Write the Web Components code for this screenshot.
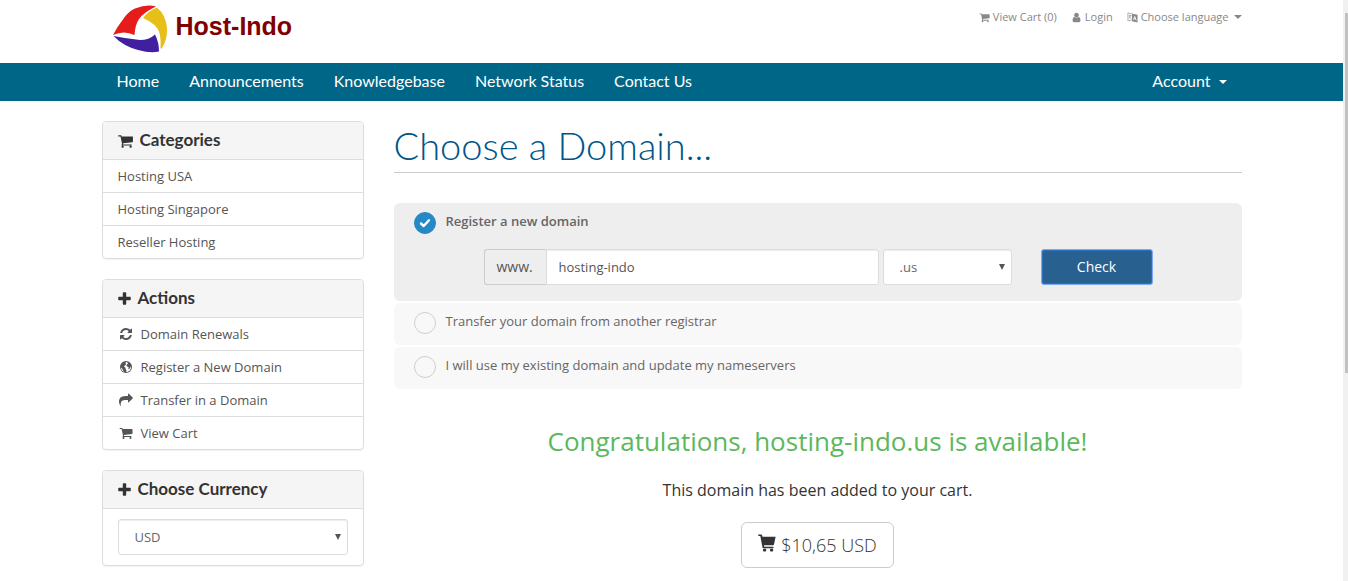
<!DOCTYPE html>
<html lang="en">
<head>
<meta charset="utf-8">
<meta name="viewport" content="width=device-width, initial-scale=1">
<title>Host-Indo - Choose a Domain</title>
<style>
  html, body { margin: 0; }
  body {
    background: #fff; color: #333; font: 13px/20px "Open Sans", sans-serif;
    --display: Lato, "Open Sans", sans-serif;
    --line: #ddd;
  }
</style>
</head>
<body>
<host-app></host-app>

<script>
const ICONS = {
  cart: ['64 0 1664 1792', '<path d="M704 1536q0 52-38 90t-90 38-90-38-38-90 38-90 90-38 90 38 38 90zm896 0q0 52-38 90t-90 38-90-38-38-90 38-90 90-38 90 38 38 90zm128-1088v512q0 24-16.500 42.500t-40.500 21.500l-1044 122q13 60 13 70 0 16-24 64h920q26 0 45 19t19 45-19 45-45 19h-1024q-26 0-45-19t-19-45q0-11 8-31.500t16-36 21.500-40 15.500-29.500l-177-823h-204q-26 0-45-19t-19-45 19-45 45-19h256q16 0 28.500 6.500t19.500 15.500 13 24.500 8 26 5.500 29.500 4.500 26h1201q26 0 45 19t19 45z"/>'],
  plus: ['192 0 1408 1792', '<path d="M1600 736v192q0 40-28 68t-68 28h-416v416q0 40-28 68t-68 28h-192q-40 0-68-28t-28-68v-416h-416q-40 0-68-28t-28-68v-192q0-40 28-68t68-28h416v-416q0-40 28-68t68-28h192q40 0 68 28t28 68v416h416q40 0 68 28t28 68z"/>'],
  refresh: ['0 0 1792 1792', '<path d="M1639 1056q0 5-1 7-64 268-268 434.500t-478 166.500q-146 0-282.500-55t-243.500-157l-129 129q-19 19-45 19t-45-19-19-45v-448q0-26 19-45t45-19h448q26 0 45 19t19 45-19 45l-137 137q71 66 161 102t187 36q134 0 250-65t186-179q11-17 53-117 8-23 30-23h192q13 0 22.500 9.500t9.500 22.500zm25-800v448q0 26-19 45t-45 19h-448q-26 0-45-19t-19-45 19-45l138-138q-148-137-349-137-134 0-250 65t-186 179q-11 17-53 117-8 23-30 23h-199q-13 0-22.500-9.500t-9.500-22.500v-7q65-268 270-434.500t480-166.500q146 0 284 55.500t245 156.500l130-129q19-19 45-19t45 19 19 45z"/>'],
  share: ['0 0 1792 1792', '<path d="M1792 640q0 26-19 45l-512 512q-19 19-45 19t-45-19-19-45v-256h-224q-98 0-175.500 6t-154 21.500-133 42.500-105.500 69.500-80 101-48.500 138.500-17.500 181q0 55 5 123 0 6 2.500 23.500t2.500 26.500q0 15-8.500 25t-23.500 10q-16 0-28-17-7-9-13-22t-13.500-30-10.500-24q-127-285-127-451 0-199 53-333 162-403 875-403h224v-256q0-26 19-45t45-19 45 19l512 512q19 19 19 45z"/>'],
  user: ['0 0 1792 1792', '<path d="M1536 1399q0 109-62.500 187t-150.500 78h-854q-88 0-150.500-78t-62.500-187q0-85 8.500-160.500t31.500-152 58.500-131 94-89 134.500-34.500q131 128 313 128t313-128q76 0 134.500 34.500t94 89 58.500 131 31.500 152 8.500 160.500zm-256-887q0 159-112.500 271.500t-271.500 112.500-271.500-112.500-112.500-271.500 112.500-271.500 271.500-112.500 271.500 112.500 112.500 271.500z"/>'],
  globe: ['0 0 14 14', '<circle cx="7" cy="7" r="6"/><path fill="#fff" d="M7 1.900L8.600 1.900 8 2.800 9.200 3.400 7.900 4.600 7.300 5.600 8.200 6.600 9.600 7 9.300 9.200 10.300 8.900 11.400 7.300 12 6.600 11.900 8.500 10.400 11 8.400 12.100 7 11.800 7.600 10.400 6.700 9.200 6.300 7.600 5 6.800 6 5.200 7.200 4.300 6.500 3.300zM2 7.500L3.200 8.600 4.300 10.900 5.100 11.900 3.400 10.900 2.300 9.300z"/>'],
  language: ['0 0 12 12', '<path fill="none" stroke="currentColor" stroke-width=".7" d="M6 2L1 1V9.600L5.500 8.600M2 4H5M3.500 3V4Q3 6.500 1.800 7M2.500 5L4.700 7"/><path d="M5.500 1.900L11.500 3V11.500L5.500 10z"/><path fill="none" stroke="#fff" stroke-width=".9" d="M7 8.500L8.500 4.800 10 9.200M7.500 7.200L9.400 7.600"/>'],
  basket: ['0 0 18 18', '<path d="M.300.500H3.200Q3.900.500 4.100 1.200L4.500 2.800H17.600L16 10.500Q15.800 11.300 15 11.300H5.900L6.300 12.800H15.500V14.200H5.300Q4.700 14.200 4.500 13.600L2.300 2H.300z"/><rect x="5" y="14.800" width="3.200" height="2.600" rx="1"/><rect x="12" y="14.800" width="3.200" height="2.600" rx="1"/>'],
  caret: ['0 0 8 4', '<path d="M0 0H8L4 4z"/>'],
  arrow: ['0 0 6 6', '<path d="M0 0H6L3 6z"/>'],
  check: ['0 0 12 12', '<path fill="none" stroke="currentColor" stroke-width="2.400" stroke-linecap="round" stroke-linejoin="round" d="M2 6.500L4.700 9 10 3.200"/>'],
  logo: ['0 0 56 48', '<path fill="#e51b1c" d="M0 30Q4 22 11 13 16 6 22 3.500 34-1 43 1.500 31 7 26 14 22 20 21.500 30 11 25 0 30z"/><path fill="#e8bf18" d="M44 2.500Q53 10 54 23 54.500 35 48.500 44L47.500 43Q48 34 46.500 28 44 19 30 13 35 6 44 2.500z"/><path fill="#41209f" d="M.500 31Q13 33.500 27 35 36 35 42 29.500 46 37 46 46.500 38 48.500 25 45 10 41 .500 31z"/>']
};

function define(name, markup, after) {
  const template = document.createElement('template');
  template.innerHTML = markup;
  customElements.define(name, class extends HTMLElement {
    constructor() {
      super();
      this.attachShadow({ mode: 'open' }).append(template.content.cloneNode(true));
    }
    connectedCallback() { if (after) after(this, this.shadowRoot); }
  });
}

define('ui-icon', `
<style>
  :host { display: inline-block; flex: none; width: 14px; height: 14px; }
  svg { display: block; width: 100%; height: 100%; fill: currentColor; }
</style><svg aria-hidden="true"></svg>`, (el, root) => {
  const [box, shape] = ICONS[el.getAttribute('name')];
  const svg = root.querySelector('svg');
  svg.setAttribute('viewBox', box);
  svg.innerHTML = shape;
});

define('site-header', `
<style>
  :host { display: block; }
  .wrap { box-sizing: border-box; max-width: 1170px; margin: 0 auto; padding: 0 15px; display: flex; justify-content: space-between; }
  .top { height: 63px; }
  .brand { display: flex; align-items: center; gap: 7px; margin-left: 11px; height: 58px; color: #800000; font: bold 25px/28px "Liberation Sans", Arial, sans-serif; text-decoration: none; }
  .brand ui-icon { width: 56px; height: 48px; }
  .brand span { margin-bottom: 6px; }
  .tools { display: flex; gap: 14px; padding-top: 7px; font-size: 11px; }
  .tools a { display: flex; align-items: center; gap: 3px; height: 20px; color: #888; text-decoration: none; }
  .tools ui-icon { width: 11px; height: 11px; }
  .tools .caret { width: 8px; height: 4px; margin-left: 2px; }
  .bar { background: #006687; }
  nav a { display: flex; align-items: center; padding: 8px 15px 10px; color: #fff; font: 16px/20px var(--display); text-decoration: none; }
  .menu { display: flex; }
  nav .caret { width: 8px; height: 4px; margin: 2px 0 0 8px; }
</style>
<header class="wrap top">
  <a class="brand" href="#"><ui-icon name="logo"></ui-icon><span>Host-Indo</span></a>
  <div class="tools">
    <a href="#"><ui-icon name="cart"></ui-icon>View Cart (0)</a>
    <a href="#"><ui-icon name="user"></ui-icon>Login</a>
    <a href="#"><ui-icon name="language"></ui-icon>Choose language<ui-icon class="caret" name="caret"></ui-icon></a>
  </div>
</header>
<div class="bar">
  <nav class="wrap">
    <div class="menu">
      <a href="#">Home</a><a href="#">Announcements</a><a href="#">Knowledgebase</a><a href="#">Network Status</a><a href="#">Contact Us</a>
    </div>
    <a href="#">Account<ui-icon class="caret" name="caret"></ui-icon></a>
  </nav>
</div>`);

define('side-panel', `
<style>
  :host { display: block; border: 1px solid var(--line); border-radius: 4px; box-shadow: 0 1px 1px rgba(0,0,0,.05); overflow: hidden; }
  h3 { display: flex; align-items: center; gap: 7px; height: 37px; box-sizing: content-box; margin: 0; padding: 0 15px; background: #f5f5f5; border-bottom: 1px solid var(--line); font: bold 17px/20px var(--display); color: #333; }
  ::slotted(ui-icon) { width: 15px; height: 16px; }
  ::slotted(ui-icon[name=plus]) { width: 13px; }
  h3 span { padding-bottom: 2px; }
</style>
<h3><slot name="icon"></slot><span><slot name="heading"></slot></span></h3>
<slot></slot>`);

define('panel-link', `
<style>
  :host { display: block; }
  :host(:not(:last-child)) { border-bottom: 1px solid var(--line); }
  a { display: flex; align-items: center; height: 32px; padding: 0 15px; color: #555; text-decoration: none; }
  ::slotted(ui-icon) { margin: 0 8px 0 1px; }
</style>
<a href="#"><slot name="icon"></slot><slot></slot></a>`);

const FIELD = `
  .field { box-sizing: border-box; height: 36px; margin: 0; border: 1px solid var(--line); border-radius: 3px; background: #fff; color: #666; font: 13px/20px "Open Sans", sans-serif; box-shadow: inset 0 1px 1px rgba(0,0,0,.075); }
  select.field { appearance: none; width: 100%; padding: 0 16px; }
  .pick { display: grid; align-items: center; }
  .pick > * { grid-area: 1 / 1; }
  .pick ui-icon { width: 6px; height: 6px; justify-self: end; margin-right: 7px; color: #555; pointer-events: none; }`;

define('currency-picker', `
<style>:host { display: block; padding: 10px 15px; } ${FIELD}</style>
<div class="pick"><select class="field" aria-label="Choose Currency"><option>USD</option></select><ui-icon name="arrow"></ui-icon></div>`);

define('domain-options', `
<style>
  ${FIELD}
  :host { display: grid; gap: 2px; }
  .option { min-height: 42px; background: #f8f8f8; border-radius: 6px; }
  .option.on { min-height: 98px; background: #eee; }
  .choice { display: flex; gap: 10px; padding: 9px 20px 0; color: #666; }
  .on .choice { font-weight: 600; }
  .choice > span { line-height: 18px; }
  .dot { display: grid; place-items: center; flex: none; }
  .dot > * { grid-area: 1 / 1; }
  input[type=radio] { appearance: none; box-sizing: border-box; width: 22px; height: 22px; margin: 0; border: 1px solid #d0d0c8; border-radius: 50%; }
  input[type=radio]:checked { background: #2489c5; border-color: #2489c5; }
  .dot ui-icon { width: 12px; height: 12px; color: #fff; pointer-events: none; }
  .search { display: grid; grid-template-columns: 1fr 129px 112px; margin: 15px 89px 0 90px; }
  .group { display: flex; margin-right: 4px; }
  .addon { box-sizing: border-box; width: 62px; height: 36px; padding: 7px 12px; border: 1px solid #ccc; border-right: 0; border-radius: 3px 0 0 3px; font-size: 14px; color: #555; }
  .group .field { flex: 1; min-width: 0; padding: 0 12px; border-radius: 0 3px 3px 0; color: #555; }
  .search { grid-template-columns: 1fr 129px 141px; }
  button { height: 36px; margin: 0 0 0 29px; padding: 0; border: 1px solid #7aa9f2; border-radius: 3px; box-shadow: inset 0 0 0 1px #2f6fc0; background: #286090; color: #fff; font: 14px/20px "Open Sans", sans-serif; }
</style>
<div class="option on">
  <label class="choice"><span class="dot"><input type="radio" name="mode" checked><ui-icon name="check"></ui-icon></span><span>Register a new domain</span></label>
  <div class="search">
    <div class="group"><label class="addon" for="sld">www.</label><input class="field" id="sld" type="text" value="hosting-indo"></div>
    <div class="pick"><select class="field" aria-label="Extension"><option>.us</option></select><ui-icon name="arrow"></ui-icon></div>
    <button type="button">Check</button>
  </div>
</div>
<div class="option"><label class="choice"><span class="dot"><input type="radio" name="mode"></span><span>Transfer your domain from another registrar</span></label></div>
<div class="option"><label class="choice"><span class="dot"><input type="radio" name="mode"></span><span>I will use my existing domain and update my nameservers</span></label></div>`);

define('domain-result', `
<style>
  :host { display: flex; flex-direction: column; align-items: center; text-align: center; }
  h2 { margin: 0; color: #5cb85c; font: 400 26px/34px "Open Sans", sans-serif; }
  p { margin: 20px 0; font-size: 16px; line-height: 24px; }
  button { display: flex; align-items: center; gap: 5px; height: 46px; padding: 0 16px; border: 1px solid #ccc; border-radius: 6px; background: #fff; color: #333; font: 300 18px/24px "Open Sans", sans-serif; }
  ui-icon { width: 18px; height: 18px; margin-bottom: 4px; }
</style>
<h2>Congratulations, hosting-indo.us is available!</h2>
<p>This domain has been added to your cart.</p>
<button type="button"><ui-icon name="basket"></ui-icon>$10,65 USD</button>`);

define('scroll-rail', `
<style>
  :host { display: block; box-sizing: border-box; height: 100vh; padding: 13px 0 0 2px; background: #f1f1f1; }
  div { height: 62vh; background: #c1c1c1; }
</style><div></div>`);

define('host-app', `
<style>
  :host { display: grid; grid-template-columns: 1fr 5px; min-height: 100vh; }
  .content { box-sizing: border-box; max-width: 1170px; margin: 0 auto; padding: 20px 15px 13px; display: grid; grid-template-columns: 262px 1fr; gap: 30px; }
  aside { display: flex; flex-direction: column; gap: 20px; }
  h1 { margin: 0 0 30px; padding: 2px 0 5px; border-bottom: 1px solid #ccc; color: #058; font: 300 38px/44px var(--display); }
  domain-result { margin-top: 35px; }
</style>
<div class="page">
  <site-header></site-header>
  <div class="content">
    <aside>
      <side-panel>
        <ui-icon slot="icon" name="cart"></ui-icon><span slot="heading">Categories</span>
        <panel-link>Hosting USA</panel-link><panel-link>Hosting Singapore</panel-link><panel-link>Reseller Hosting</panel-link>
      </side-panel>
      <side-panel>
        <ui-icon slot="icon" name="plus"></ui-icon><span slot="heading">Actions</span>
        <panel-link><ui-icon slot="icon" name="refresh"></ui-icon>Domain Renewals</panel-link><panel-link><ui-icon slot="icon" name="globe"></ui-icon>Register a New Domain</panel-link><panel-link><ui-icon slot="icon" name="share"></ui-icon>Transfer in a Domain</panel-link><panel-link><ui-icon slot="icon" name="cart"></ui-icon>View Cart</panel-link>
      </side-panel>
      <side-panel>
        <ui-icon slot="icon" name="plus"></ui-icon><span slot="heading">Choose Currency</span>
        <currency-picker></currency-picker>
      </side-panel>
    </aside>
    <main>
      <h1>Choose a Domain...</h1>
      <domain-options></domain-options>
      <domain-result></domain-result>
    </main>
  </div>
</div>
<scroll-rail></scroll-rail>`);
</script>
</body>
</html>
